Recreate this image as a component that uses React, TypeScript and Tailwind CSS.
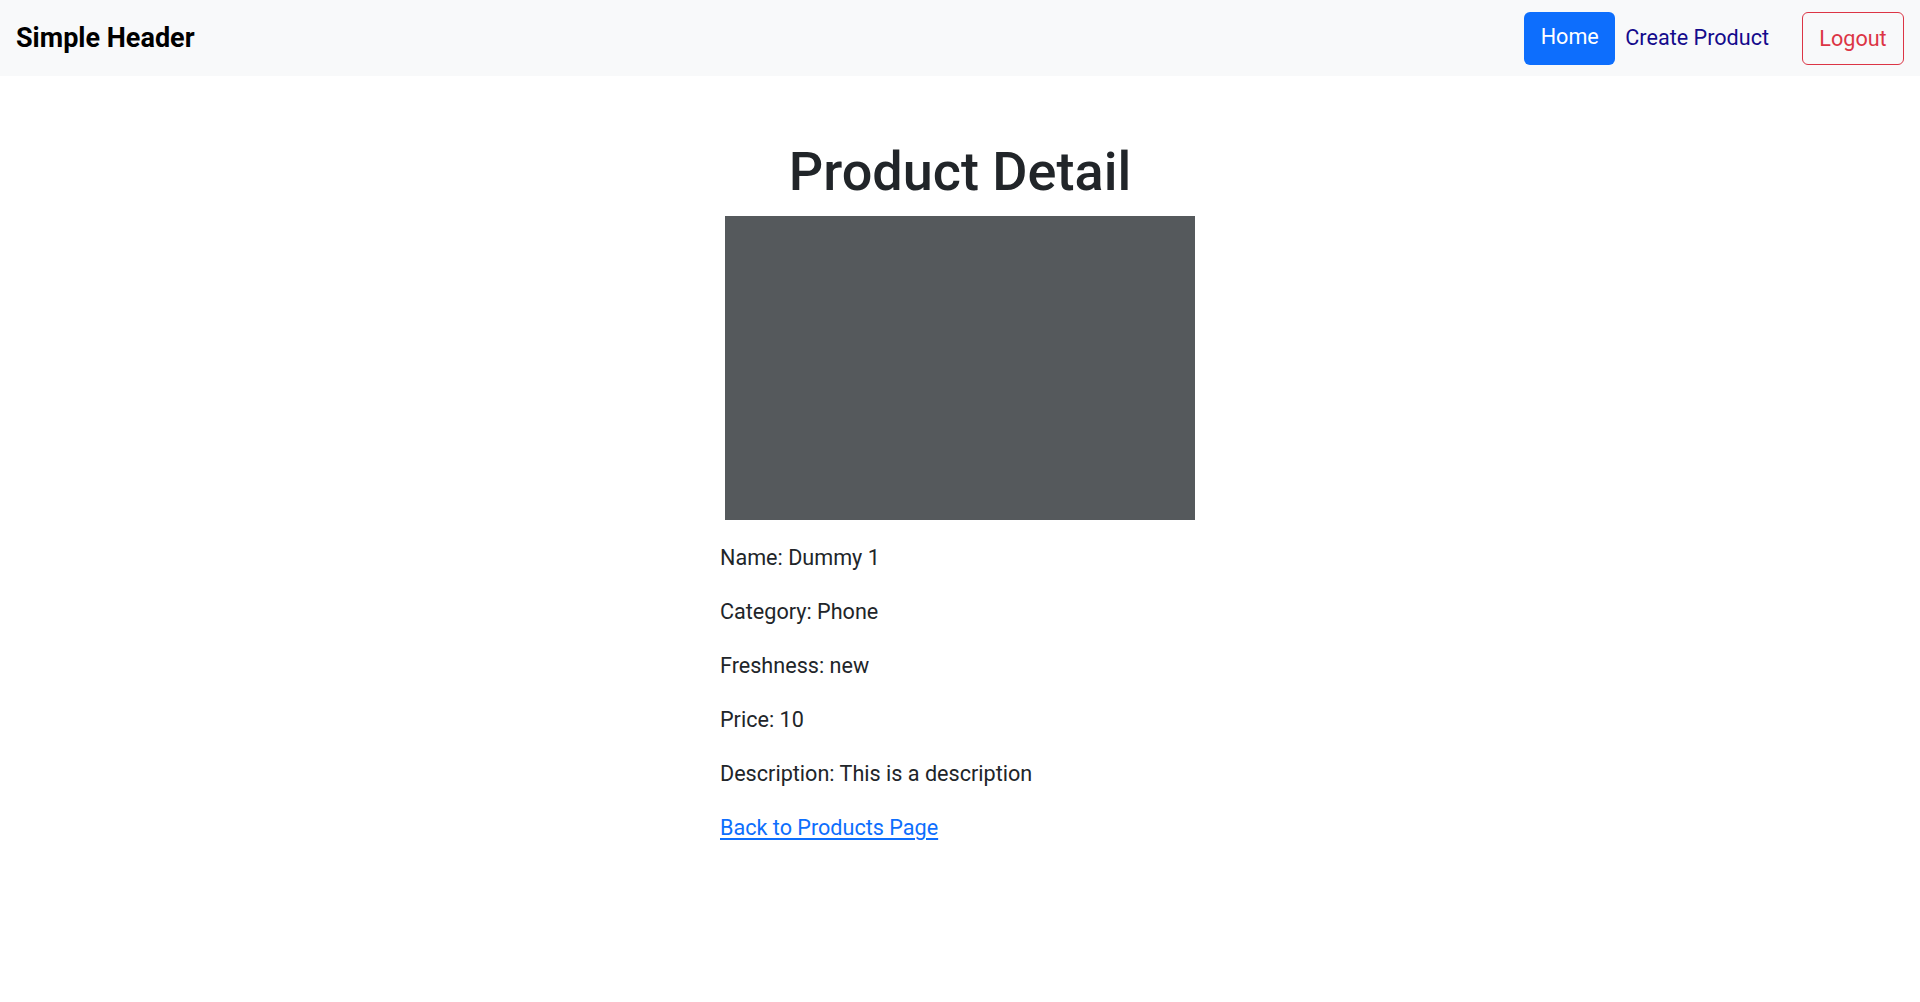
const product = {
  name: "Dummy 1",
  category: "Phone",
  freshness: "new",
  price: 10,
  description: "This is a description",
};

const App = () => {
  const rows = [
    ["Name", product.name],
    ["Category", product.category],
    ["Freshness", product.freshness],
    ["Price", product.price],
    ["Description", product.description],
  ];

  return (
    <div className="min-h-screen bg-white text-[#212529] font-['Roboto',sans-serif]">
      <header className="h-[76px] bg-[#f8f9fa] flex items-center justify-between pl-4 pr-4">
        <h1 className="text-[27px] font-bold text-black leading-none">Simple Header</h1>
        <nav className="flex items-center">
          <a href="#" className="h-[53px] w-[91px] flex items-center justify-center rounded-[6px] bg-[#0d6efd] text-white text-[21.6px] pb-[2px]">
            Home
          </a>
          <a href="#" className="ml-[10px] text-[21.6px] text-[#140b8c]">
            Create Product
          </a>
          <button className="ml-[33px] h-[53px] w-[102px] flex items-center justify-center rounded-[6px] border border-[#dc3545] text-[#dc3545] text-[21.6px] pt-[2px]">
            Logout
          </button>
        </nav>
      </header>

      <main className="w-[480px] mx-auto pt-[64px]">
        <h2 className="text-[54px] leading-[1.2] font-medium text-center">Product Detail</h2>
        <div className="mt-[11px] mx-[5px] h-[304px] bg-[#55595c]" />
        <div className="mt-[21px] text-[21.6px] leading-[33px]">
          {rows.map(([label, value]) => (
            <p key={label} className="mb-[21px]">
              {label}: {value}
            </p>
          ))}
          <a href="#" className="text-[#0d6efd] underline underline-offset-[3px]">
            Back to Products Page
          </a>
        </div>
      </main>
    </div>
  );
};

export default App;
